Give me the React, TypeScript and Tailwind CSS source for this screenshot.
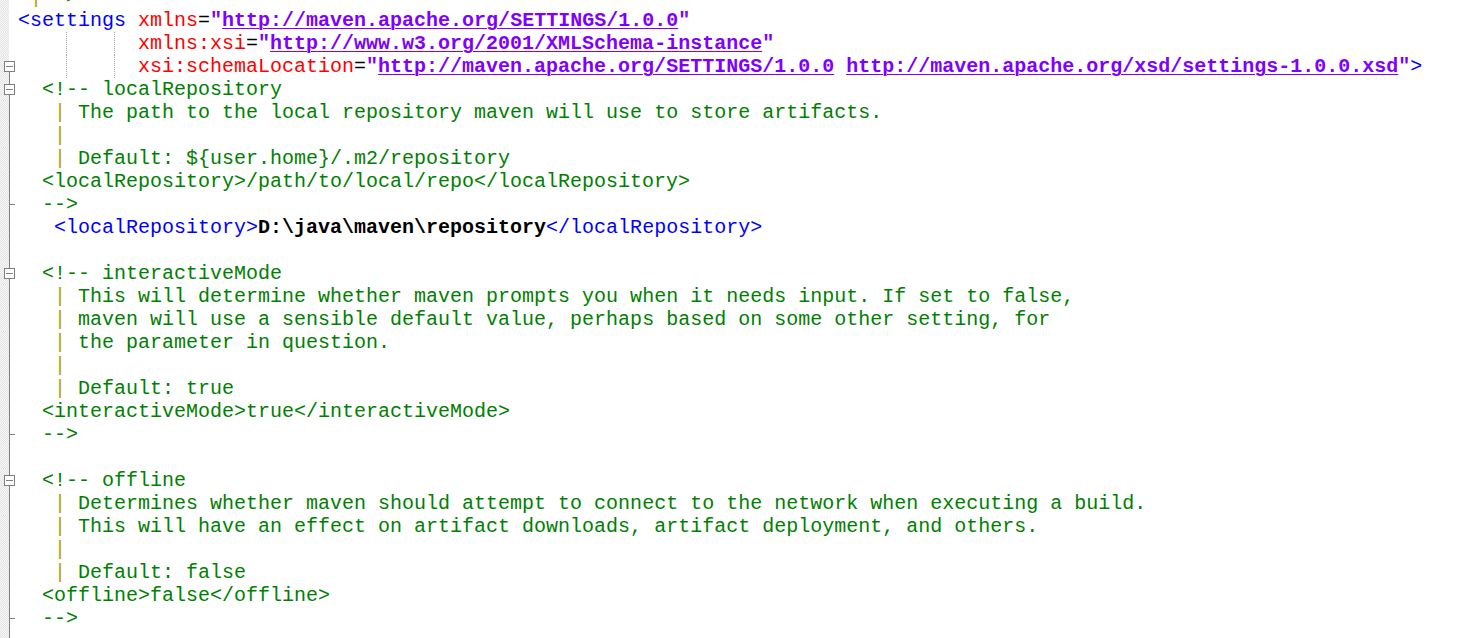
import React from "react";

type Seg = [string, string];
type Fold = "none" | "head0" | "head" | "body" | "tail";
type Line = { fold: Fold; segs: Seg[]; guides?: boolean };

const C = "text-[#008000]";
const P = "text-[#b0a000]";
const T = "text-[#0000ff]";
const A = "text-[#ff0000]";
const V = "font-bold text-[#8000ff]";
const U = "font-bold text-[#8000ff] underline decoration-1 underline-offset-2";
const K = "text-black";
const B = "font-bold text-black";

const pipe = (text: string): Seg[] => [
  [C, "   "],
  [P, "|"],
  [C, text],
];

const lines: Line[] = [
  { fold: "none", segs: [[C, " "], [P, "|"], [C, "-->"]] },
  {
    fold: "none",
    segs: [
      [T, "<settings "],
      [A, "xmlns"],
      [K, "="],
      [V, '"'],
      [U, "http://maven.apache.org/SETTINGS/1.0.0"],
      [V, '"'],
    ],
  },
  {
    fold: "none",
    guides: true,
    segs: [
      [A, "xmlns:xsi"],
      [K, "="],
      [V, '"'],
      [U, "http://www.w3.org/2001/XMLSchema-instance"],
      [V, '"'],
    ],
  },
  {
    fold: "head0",
    guides: true,
    segs: [
      [A, "xsi:schemaLocation"],
      [K, "="],
      [V, '"'],
      [U, "http://maven.apache.org/SETTINGS/1.0.0"],
      [V, " "],
      [U, "http://maven.apache.org/xsd/settings-1.0.0.xsd"],
      [V, '"'],
      [T, ">"],
    ],
  },
  { fold: "head", segs: [[C, "  <!-- localRepository"]] },
  { fold: "body", segs: pipe(" The path to the local repository maven will use to store artifacts.") },
  { fold: "body", segs: pipe("") },
  { fold: "body", segs: pipe(" Default: ${user.home}/.m2/repository") },
  { fold: "body", segs: [[C, "  <localRepository>/path/to/local/repo</localRepository>"]] },
  { fold: "tail", segs: [[C, "  -->"]] },
  {
    fold: "body",
    segs: [
      [K, "   "],
      [T, "<localRepository>"],
      [B, "D:\\java\\maven\\repository"],
      [T, "</localRepository>"],
    ],
  },
  { fold: "body", segs: [] },
  { fold: "head", segs: [[C, "  <!-- interactiveMode"]] },
  {
    fold: "body",
    segs: pipe(" This will determine whether maven prompts you when it needs input. If set to false,"),
  },
  {
    fold: "body",
    segs: pipe(" maven will use a sensible default value, perhaps based on some other setting, for"),
  },
  { fold: "body", segs: pipe(" the parameter in question.") },
  { fold: "body", segs: pipe("") },
  { fold: "body", segs: pipe(" Default: true") },
  { fold: "body", segs: [[C, "  <interactiveMode>true</interactiveMode>"]] },
  { fold: "tail", segs: [[C, "  -->"]] },
  { fold: "body", segs: [] },
  { fold: "head", segs: [[C, "  <!-- offline"]] },
  {
    fold: "body",
    segs: pipe(" Determines whether maven should attempt to connect to the network when executing a build."),
  },
  {
    fold: "body",
    segs: pipe(" This will have an effect on artifact downloads, artifact deployment, and others."),
  },
  { fold: "body", segs: pipe("") },
  { fold: "body", segs: pipe(" Default: false") },
  { fold: "body", segs: [[C, "  <offline>false</offline>"]] },
  { fold: "tail", segs: [[C, "  -->"]] },
  { fold: "body", segs: [] },
];

function Gutter({ fold }: { fold: Fold }) {
  const g = "#808080";
  return (
    <div className="relative w-[18px] shrink-0">
      <div className="h-full w-[9px] bg-[repeating-conic-gradient(#e3e3e3_0%_25%,#f7f7f7_0%_50%)] bg-[length:2px_2px]" />
      {fold !== "none" && (
        <svg className="absolute inset-0" width="18" height="23" viewBox="0 0 18 23" shapeRendering="crispEdges">
          {(fold === "body" || fold === "tail") && <rect x="9" y="0" width="1" height="23" fill={g} />}
          {fold === "tail" && <rect x="10" y="11" width="5" height="1" fill={g} />}
          {(fold === "head0" || fold === "head") && (
            <>
              {fold === "head" && <rect x="9" y="0" width="1" height="6" fill={g} />}
              <rect x="9" y="17" width="1" height="6" fill={g} />
              <rect x="4" y="6" width="11" height="11" fill={g} />
              <rect x="5" y="7" width="9" height="9" fill="#ffffff" />
              <rect x="6" y="11" width="7" height="1" fill={g} />
            </>
          )}
        </svg>
      )}
    </div>
  );
}

export default function App() {
  return (
    <div className="h-[638px] w-[1480px] overflow-hidden bg-white font-['Liberation_Mono','Courier_New',monospace] text-[20px] leading-[23px]">
      <div className="-mt-[14px]">
        {lines.map((line, i) => (
          <div key={i} className="flex h-[23px]">
            <Gutter fold={line.fold} />
            {line.guides && (
              <>
                <span className="w-[48px] shrink-0" />
                <span className="w-[48px] shrink-0 border-l border-dotted border-[#a8a8a8]" />
                <span className="w-[24px] shrink-0 border-l border-dotted border-[#a8a8a8]" />
              </>
            )}
            <div className="whitespace-pre">
              {line.segs.map(([cls, text], j) => (
                <span key={j} className={cls}>
                  {text}
                </span>
              ))}
            </div>
          </div>
        ))}
      </div>
    </div>
  );
}
